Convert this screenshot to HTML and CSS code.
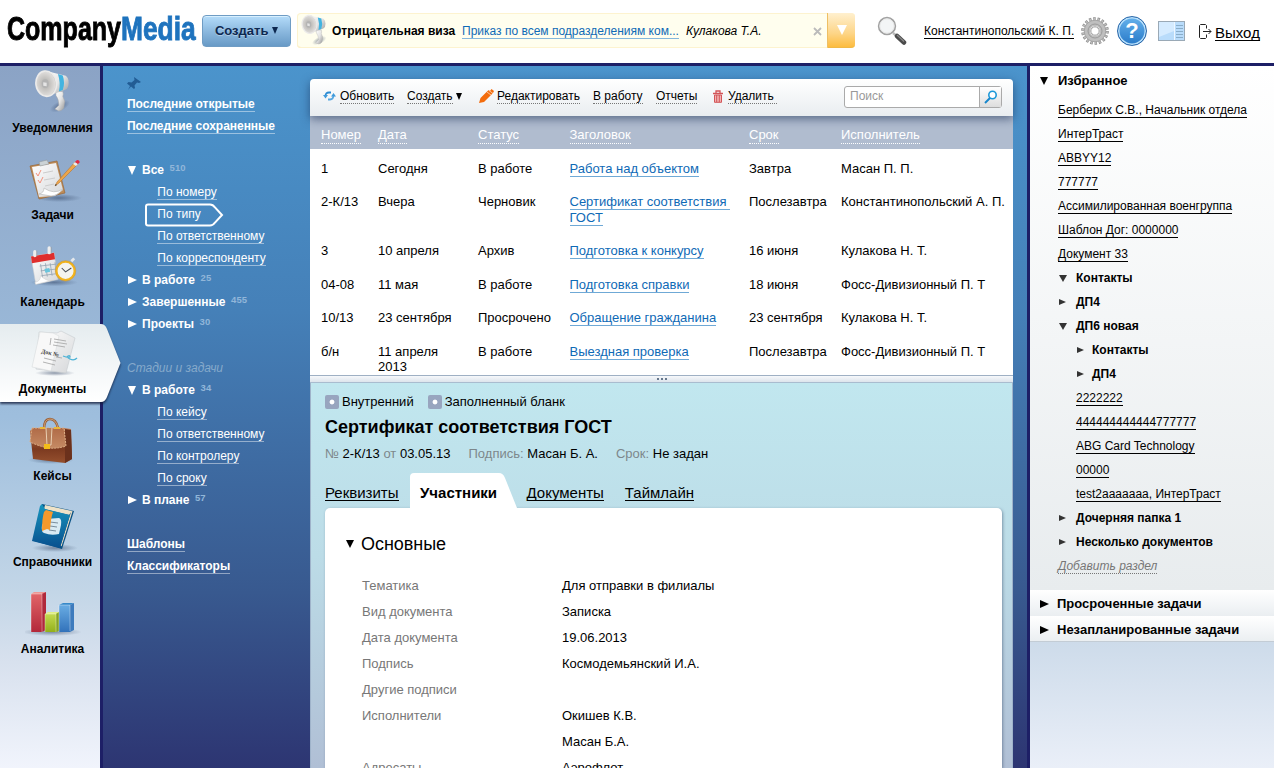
FILE: index.html
```html
<!DOCTYPE html>
<html lang="ru">
<head>
<meta charset="utf-8">
<title>CompanyMedia</title>
<link rel="stylesheet" href="styles.css">
</head>
<body>
<svg class="defs" width="0" height="0" aria-hidden="true">
  <defs>
    <linearGradient id="metal" x1="0" x2="1" y1="0" y2="1"><stop offset="0" stop-color="#fff"/><stop offset=".5" stop-color="#e4e4e4"/><stop offset="1" stop-color="#959595"/></linearGradient>
    <linearGradient id="paper" x1="0" x2="1" y1="0" y2="1"><stop offset="0" stop-color="#fff"/><stop offset="1" stop-color="#d5d7d9"/></linearGradient>
    <linearGradient id="leather" x1="0" x2="0" y1="0" y2="1"><stop offset="0" stop-color="#c07a50"/><stop offset=".6" stop-color="#7c3a20"/><stop offset="1" stop-color="#95502e"/></linearGradient>
    <linearGradient id="flap" x1="0" x2="0" y1="0" y2="1"><stop offset="0" stop-color="#b06b47"/><stop offset="1" stop-color="#c58a64"/></linearGradient>
    <linearGradient id="book" x1="0" x2="0" y1="0" y2="1"><stop offset="0" stop-color="#1795bd"/><stop offset="1" stop-color="#08508f"/></linearGradient>
    <linearGradient id="red" x1="0" x2="0" y1="0" y2="1"><stop offset="0" stop-color="#e16468"/><stop offset="1" stop-color="#b3283a"/></linearGradient>
    <linearGradient id="green" x1="0" x2="0" y1="0" y2="1"><stop offset="0" stop-color="#c3da50"/><stop offset="1" stop-color="#93b01b"/></linearGradient>
    <linearGradient id="blue" x1="0" x2="0" y1="0" y2="1"><stop offset="0" stop-color="#69ace3"/><stop offset="1" stop-color="#3272ba"/></linearGradient>
    <radialGradient id="horn" cx=".45" cy=".5" r=".55"><stop offset="0" stop-color="#a5a5a5"/><stop offset=".4" stop-color="#c4c2bf"/><stop offset=".85" stop-color="#dedcda"/><stop offset="1" stop-color="#bdbdbd"/></radialGradient>
    <radialGradient id="shade"><stop offset="0" stop-color="#2a3c5c" stop-opacity=".5"/><stop offset="1" stop-color="#2a3c5c" stop-opacity="0"/></radialGradient>
    <symbol id="megaphone" viewBox="0 0 40 44">
      <ellipse cx="26" cy="37" rx="11" ry="5" fill="url(#shade)" transform="rotate(-25 26 37)"/>
      <path d="M22 22h7q1 3 0 5l2 5-1 7q-2 3-5 3l-4-2 4-4q0-6-3-10z" fill="url(#metal)" stroke="#aaa" stroke-width=".5"/>
      <path d="M12 1l20 5q3 2 3 7t-3 7L13 27z" fill="url(#metal)"/>
      <path d="M24 4l5 1.500q2.500 7.500 0 15l-4 1.500q2-9-1-18z" fill="#43b4e0"/>
      <ellipse cx="12" cy="14" rx="10.500" ry="13" fill="url(#horn)" stroke="#ecebea" stroke-width="1.600" transform="rotate(-8 12 14)"/>
      <ellipse cx="11" cy="14" rx="3.500" ry="4.500" fill="#b3b3b3"/><path d="M9 12.500l3.500.5v3.500L9 16z" fill="#e5e5e5"/>
    </symbol>
  </defs>
</svg>

<header class="header">
  <div class="logo"><span class="logo-company">Company</span><span class="logo-media">Media</span></div>
  <button class="create">Создать <i class="tri-down"></i></button>
  <div class="notice">
    <svg class="notice-icon" width="28" height="33"><use href="#megaphone" width="28" height="32"/></svg>
    <b>Отрицательная виза</b>
    <a class="notice-link">Приказ по всем подразделениям ком...</a>
    <em>Кулакова Т.А.</em>
    <svg class="dismiss" width="9" height="9" viewBox="0 0 9 9"><path d="M1 1l7 7M8 1L1 8" stroke="#bbb" stroke-width="1.800"/></svg>
    <span class="notice-more"><i></i></span>
  </div>
  <svg width="30" height="30" viewBox="0 0 30 30"><path d="M16 17l5 4" stroke="#bbb" stroke-width="2.500"/><path d="M20 20l7 6.500" stroke="#4b4b4b" stroke-width="4.500" stroke-linecap="round"/><path d="M20 19l7 6.500" stroke="#888" stroke-width="1.200"/><circle cx="10" cy="10" r="8.300" fill="#f3f5f6" stroke="#a2a2a2" stroke-width="1.800"/><circle cx="10" cy="10" r="7.200" fill="none" stroke="#e6e6e6"/></svg>
  <a class="user">Константинопольский К. П.</a>
  <svg width="28" height="28" viewBox="-14 -14 28 28"><circle r="12" fill="none" stroke="#8a8a8a" stroke-width="3.600" stroke-dasharray="2.400 1.789"/><circle r="12" fill="none" stroke="#bdbdbd" stroke-width="2.400" stroke-dasharray="1.400 2.789" stroke-dashoffset="-.5"/><circle r="8" fill="none" stroke="#bfbfbf" stroke-width="6"/><circle r="10.800" fill="none" stroke="#999" stroke-width=".7"/><circle r="7" fill="none" stroke="#9b9b9b" stroke-width="1"/><circle r="4.200" fill="#fff" stroke="#999"/></svg>
  <span class="help">?</span>
  <svg width="27" height="20" viewBox="0 0 27 20"><rect x=".5" y=".5" width="26" height="19" fill="#b9dcfb" stroke="#9aa9b6"/><path d="M1 1h15v9L1 16z" fill="#d5ebff"/><path d="M16.500 1v18" stroke="#eef7ff"/><path d="M18 4.500h7M18 7.500h7M18 10.500h7M18 13.500h7M18 16.500h7" stroke="#8aaeca"/></svg>
  <svg class="door" width="13" height="16" viewBox="0 0 13 16"><path d="M7.500 4.500V1.500l-1-1h-5l-1 1v12l1 1h5l1-1V10.500M4 7.500h8M9.500 5l2.500 2.500L9.500 10" fill="none" stroke="#222"/></svg>
  <a class="exit">Выход</a>
</header>

<div class="body">
  <aside class="rail">
    <a class="rail-item"><svg width="60" height="50"><use href="#megaphone" x="8" y="2" width="42" height="43"/></svg>Уведомления</a>
    <a class="rail-item"><svg width="60" height="50" viewBox="0 0 60 50"><ellipse cx="34" cy="43" rx="23" ry="4" fill="url(#shade)"/><path d="M5 11l27-5 8 32-26 6z" fill="#bd8b57" stroke="#99683a" stroke-width=".7"/><path d="M7 12l24-4 7 27-8 6-16 1z" fill="url(#paper)"/><path d="M14 39q5-1 5-6 10 7 19 1-6 7-12 7z" fill="#fff" stroke="#bbb" stroke-width=".7"/><path d="M14 7l8-2 2 4-9 2z" fill="#cbd3d6" stroke="#929a9d" stroke-width=".6"/><path d="M11 18l2 3 3-6M13 25l2 3 3-6" fill="none" stroke="#f3917c"/><path d="M18 18l10-2M19 25l11-2M20 31l9-2" stroke="#ccc"/><path d="M30 31l2-4L50 7l3 2-19 19z" fill="#eda64b" stroke="#b26d25" stroke-width=".5"/><path d="M48 9l2-2 3 2-2 2z" fill="#e7eef3"/><path d="M50 7l2-2q3 0 2.500 2.500L53 9z" fill="#df2942"/><path d="M30 31l.700-2 1.300 1z" fill="#333"/></svg>Задачи</a>
    <a class="rail-item"><svg class="calendar" width="60" height="50" viewBox="0 0 60 50"><ellipse cx="29" cy="40" rx="25" ry="4" fill="url(#shade)"/><path d="M5 13l24-4 4 28-23 5z" fill="url(#paper)" stroke="#ccc" stroke-width=".5"/><path d="M5 13l24-4 1 7-24 4z" fill="#df2e2d"/><path d="M14 23l17-2M15 28l17-2M16 33l15-2M15 21l2 14M20 20l2 14M25 20l2 13M30 19l1 11" stroke="#91a2b0" stroke-width=".8" fill="none"/><path d="M19 26l5-1 1 4-5 1z" fill="#6ac5dc"/><path d="M9 40q6-1 6-7 6 6 12 5L10 42z" fill="#fff" stroke="#ccc" stroke-width=".5"/><path d="M9 8v4M24 4v5" stroke="#eee" stroke-width="3.500" stroke-linecap="round"/><path d="M11 7v6M26 3v7" stroke="#999" stroke-width=".7"/><path d="M46 17l3-3 2 2-3 3z" fill="#e5e8eb"/><circle cx="41" cy="28" r="9.500" fill="#f4f4ef" stroke="#f1b31c" stroke-width="2.300"/><circle cx="41" cy="28" r="10.700" fill="none" stroke="#d28b13" stroke-width=".4"/><path d="M37 25l4 4 6-4" stroke="#454b52" fill="none" stroke-width="1.100"/></svg>Календарь</a>
    <a class="rail-item active">
      <svg class="active-shape" width="124" height="84" viewBox="0 0 124 84"><defs><linearGradient id="act" x1="0" x2="0" y1="0" y2="1"><stop offset="0" stop-color="#e5ecef"/><stop offset="1" stop-color="#fff"/></linearGradient></defs><path d="M-5 0h106q4 0 6 5l13.500 34L107 73q-2 5-6 5H-5z" fill="url(#act)"/></svg>
      <svg class="active-icon" width="60" height="50" viewBox="0 0 60 50"><ellipse cx="30" cy="44" rx="20" ry="3" fill="url(#shade)"/><path d="M14 3l18 1 4-2 14 7-9 35-30-4z" fill="url(#paper)" stroke="#c6cbcf" stroke-width=".6"/><path d="M15 3l13 1 6 3-8 35-19-4z" fill="#f8f8f8" stroke="#d3d6d8" stroke-width=".5"/><path d="M26 9l-1 7M29 10l12 2M29 13l13 2M28 16l12 2M19 29l12 3M18 33l12 3M31 28l6 1" stroke="#aaa" stroke-width=".9" fill="none"/><path d="M38 27q5 2 7 1 0-2-2-1t2 3 7-1" stroke="#4db3d6" stroke-width="1.300" fill="none"/><text x="16" y="24" class="doc-label" transform="rotate(12 16 24)">Док №</text></svg><span class="active-label">Документы</span></a>
    <a class="rail-item"><svg width="60" height="50" viewBox="0 0 60 50"><ellipse cx="26" cy="44" rx="23" ry="4" fill="url(#shade)"/><path d="M19 13q0-10 6-10t8 9" fill="none" stroke="#996039" stroke-width="2.600"/><path d="M19 13q0-10 6-10t8 9" fill="none" stroke="#e1b88c" stroke-width=".7"/><path d="M5 15l3-3h31l7 1 1 30-7 4-32-4z" fill="url(#leather)"/><path d="M40 13l6 1 1 29-7 4z" fill="#6b311c"/><path d="M7 12h32l2 18q-9 3-17 2T5 26z" fill="url(#flap)" stroke="#dfb087" stroke-width="1" stroke-dasharray="2 1"/><path d="M21 12l1 17h4l1-17" fill="#b57c58" stroke="#ead0b3"/><path d="M19 28h6v5h-6z" fill="#f3bd19"/><path d="M15 11h5v2h-5zM29 11h6v2h-6z" fill="#e9b739"/></svg>Кейсы</a>
    <a class="rail-item"><svg width="60" height="50" viewBox="0 0 60 50"><ellipse cx="30" cy="46" rx="23" ry="4" fill="url(#shade)"/><path d="M17 2l32 7-12 38-28-8z" fill="#075083"/><path d="M20 3l27 6-3 4-25-6z" fill="#eee2c7"/><path d="M47 9l-11 35" stroke="#eadcc3" stroke-width="1.200"/><path d="M17 2l3 5 25 6-10 33-28-7L15 4z" fill="url(#book)"/><path d="M21 17l13-1q3 1 2 7l-2 9q-8 2-15-1-3-1-2-8z" fill="#d8eaf3"/><path d="M25 20l8 1M25 24l7 1M24 28l7 1" stroke="#788d9d"/><path d="M21 8l7 2q-2 5-3 18l-3-1-5 2q0-13 2-19z" fill="#f5992c"/></svg>Справочники</a>
    <a class="rail-item"><svg width="60" height="50" viewBox="0 0 60 50"><ellipse cx="27" cy="43" rx="30" ry="4" fill="url(#shade)"/><g transform="translate(-1 1)"><path d="M7 4l3-2h12l-2 2z" fill="#ee9794"/><path d="M7 4h11v38H7z" fill="url(#red)"/><path d="M18 4l4-2v38l-4 2z" fill="#b0293b"/><path d="M21 24l3-2h12l-3 2z" fill="#e0ef83"/><path d="M21 24h12v18H21z" fill="url(#green)"/><path d="M32 24l3-2v19l-3 1z" fill="#85a326"/><path d="M35 15l4-2h11l-4 2z" fill="#3689ca"/><path d="M35 15h11v27H35z" fill="url(#blue)"/><path d="M46 15l4-2v27l-4 2z" fill="#3d7bbd"/><path d="M7 42V4h11v38M35 42V15h11v26M21 42V24h11v18" fill="none" stroke="#fff" stroke-opacity=".35"/></g></svg>Аналитика</a>
  </aside>

  <nav class="nav">
    <svg class="pin" width="14" height="14" viewBox="0 0 14 14"><path d="M7 0l7 5-2 1-2-.5-2.500 3L8 11l-1 1-3-2.500L1 13l2-4L0 6.500 1.500 5l3 .5L7.500 3z" fill="#225c94"/></svg>
    <div class="row"><a class="strong">Последние открытые</a></div>
    <div class="row"><a class="strong">Последние сохраненные</a></div>
    <div class="row"></div>
    <div class="row group"><i class="down"></i><b>Все</b><sup>510</sup></div>
    <div class="row sub"><a>По номеру</a></div>
    <div class="row sub selected"><svg class="sel" width="80" height="24" viewBox="0 0 80 24"><path d="M4 1.500h62q3 0 5 3l7 7.500-7 7.500q-2 3-5 3H4q-2 0-2-2v-17q0-2 2-2z" fill="none" stroke="#fff" stroke-width="2"/></svg><a>По типу</a></div>
    <div class="row sub"><a>По ответственному</a></div>
    <div class="row sub"><a>По корреспонденту</a></div>
    <div class="row group"><i class="right"></i><b>В работе</b><sup>25</sup></div>
    <div class="row group"><i class="right"></i><b>Завершенные</b><sup>455</sup></div>
    <div class="row group"><i class="right"></i><b>Проекты</b><sup>30</sup></div>
    <div class="row"></div>
    <div class="row"><em>Стадии и задачи</em></div>
    <div class="row group"><i class="down"></i><b>В работе</b><sup>34</sup></div>
    <div class="row sub"><a>По кейсу</a></div>
    <div class="row sub"><a>По ответственному</a></div>
    <div class="row sub"><a>По контролеру</a></div>
    <div class="row sub"><a>По сроку</a></div>
    <div class="row group"><i class="right"></i><b>В плане</b><sup>57</sup></div>
    <div class="row"></div>
    <div class="row"><a class="strong">Шаблоны</a></div>
    <div class="row"><a class="strong">Классификаторы</a></div>
  </nav>

  <main class="main">
    <div class="toolbar">
      <svg width="13" height="12" viewBox="0 0 13 12"><path d="M2.500 6q0-3.500 3.500-3.500h2" fill="none" stroke="#2b8bd3" stroke-width="1.800"/><path d="M10.500 5q0 4.500-3.500 4.500H5" fill="none" stroke="#56a7e1" stroke-width="1.800"/><path d="M0 5h5L2.500 8.500zM8 6.500h5L10.500 3z" fill="#3f9adb"/></svg>
      <span><a>Обновить</a></span>
      <span><a>Создать</a> <i class="tool-down"></i></span>
      <svg width="15" height="15" viewBox="0 0 15 15"><path d="M0 14l1.500-5 7-7L10 1l1 1 1.500-2L15 2l-1 2-9 9z" fill="#f36c0c"/><path d="M8 3l4 3M10 1.500l4 3" stroke="#fff" stroke-width=".6"/></svg>
      <span><a>Редактировать</a></span>
      <span><a>В работу</a></span>
      <span><a>Отчеты</a></span>
      <svg width="10" height="13" viewBox="0 0 10 13"><path d="M0 3.500h10M3 3V1h4v2" fill="none" stroke="#d35458" stroke-width="1.300"/><path d="M1.500 5v7.300h7V5z" fill="#f2b3b3" stroke="#d35458"/><path d="M3.700 5v7M6.300 5v7" stroke="#d35458"/></svg>
      <span><a class="delete">Удалить</a></span>
      <div class="search"><span>Поиск</span><i><svg width="14" height="14" viewBox="0 0 14 14"><circle cx="8.500" cy="5" r="3.700" fill="#fff" stroke="#1c98d8" stroke-width="1.600"/><path d="M6 8l-5 5" stroke="#1686cc" stroke-width="2"/></svg></i></div>
    </div>
    <div class="table">
      <div class="tr th"><span><a>Номер</a></span><span><a>Дата</a></span><span><a>Статус</a></span><span><a>Заголовок</a></span><span><a>Срок</a></span><span><a>Исполнитель</a></span></div>
      <div class="tr"><span>1</span><span>Сегодня</span><span>В работе</span><span><a>Работа над объектом</a></span><span>Завтра</span><span>Масан П. П.</span></div>
      <div class="tr tall"><span>2-К/13</span><span>Вчера</span><span>Черновик</span><span><a>Сертификат соответствия&nbsp;<br>ГОСТ</a></span><span>Послезавтра</span><span>Константинопольский А. П.</span></div>
      <div class="tr roomy"><span>3</span><span>10 апреля</span><span>Архив</span><span><a>Подготовка к конкурсу</a></span><span>16 июня</span><span>Кулакова Н. Т.</span></div>
      <div class="tr"><span>04-08</span><span>11 мая</span><span>В работе</span><span><a>Подготовка справки</a></span><span>18 июня</span><span>Фосс-Дивизионный П. Т</span></div>
      <div class="tr roomy"><span>10/13</span><span>23 сентября</span><span>Просрочено</span><span><a>Обращение гражданина</a></span><span>23 сентября</span><span>Кулакова Н. Т.</span></div>
      <div class="tr last"><span>б/н</span><span>11 апреля<br>2013</span><span>В работе</span><span><a>Выездная проверка</a></span><span>Послезавтра</span><span>Фосс-Дивизионный П. Т</span></div>
    </div>
    <div class="splitter"><i></i><i></i><i></i></div>
    <section class="doc">
      <div class="tags"><i></i><span>Внутренний</span><i></i><span>Заполненный бланк</span></div>
      <h1>Сертификат соответствия ГОСТ</h1>
      <div class="meta"><span><s>№</s> 2-К/13 <s>от</s> 03.05.13</span><span><s>Подпись:</s> Масан Б. А.</span><span><s>Срок:</s> Не задан</span></div>
      <div class="tabs">
        <a>Реквизиты</a>
        <div class="tab-active"><svg width="108" height="35" viewBox="0 0 108 35"><path d="M0 35V4q0-4 4-4h85q4 0 6 5l12 30z" fill="#fff"/></svg><b>Участники</b></div>
        <a>Документы</a>
        <a>Таймлайн</a>
      </div>
      <div class="sheet">
        <h2><i></i>Основные</h2>
        <dl>
          <dt>Тематика</dt><dd>Для отправки в филиалы</dd>
          <dt>Вид документа</dt><dd>Записка</dd>
          <dt>Дата документа</dt><dd>19.06.2013</dd>
          <dt>Подпись</dt><dd>Космодемьянский И.А.</dd>
          <dt>Другие подписи</dt><dd></dd>
          <dt>Исполнители</dt><dd>Окишев К.В.</dd>
          <dt></dt><dd>Масан Б.А.</dd>
          <dt>Адресаты</dt><dd>Аэрофлот</dd>
        </dl>
      </div>
    </section>
  </main>

  <aside class="side">
    <section class="fav">
      <h3><i class="down"></i>Избранное</h3>
      <ul>
        <li><a>Берберих С.В., Начальник отдела</a></li>
        <li><a>ИнтерТраст</a></li>
        <li><a>ABBYY12</a></li>
        <li><a>777777</a></li>
        <li><a>Ассимилированная военгруппа</a></li>
        <li><a>Шаблон Дог: 0000000</a></li>
        <li><a>Документ 33</a></li>
        <li><i class="down"></i><b>Контакты</b></li>
        <li><i class="right"></i><b>ДП4</b></li>
        <li><i class="down"></i><b>ДП6 новая</b></li>
        <li class="in"><i class="right"></i><b class="close">Контакты</b></li>
        <li class="in"><i class="right"></i><b class="close">ДП4</b></li>
        <li class="in"><a>2222222</a></li>
        <li class="in"><a>444444444444777777</a></li>
        <li class="in"><a>ABG Card Technology</a></li>
        <li class="in"><a>00000</a></li>
        <li class="in"><a>test2aaaaaaa, ИнтерТраст</a></li>
        <li><i class="right"></i><b>Дочерняя папка 1</b></li>
        <li><i class="right"></i><b>Несколько документов</b></li>
        <li><a class="add">Добавить раздел</a></li>
      </ul>
    </section>
    <div class="bar"><i class="right"></i>Просроченные задачи</div>
    <div class="bar bar-last"><i class="right"></i>Незапланированные задачи</div>
  </aside>
</div>
</body>
</html>
```
FILE: styles.css
```css
* { box-sizing: border-box; }
body { margin: 0; width: 1274px; height: 768px; overflow: hidden; background: #fff; color: #000; font: 12px/14px "Liberation Sans", Arial, sans-serif; }
.defs { position: absolute; }
svg { display: block; }
i { font-style: normal; }

/* header */
.header { height: 66px; border-bottom: 3px solid #1d1f66; display: grid; grid-template-columns: 202px 95px 580px 47px 157px 36px 41px 41px 16px auto; align-items: center; }
.header > * { margin-bottom: 2px; }
.logo { align-self: start; display: flex; padding: 8px 0 0 7px; width: 202px; font: bold 34px/40px "Liberation Sans", sans-serif; }
.logo span { flex: none; transform-origin: 0 0; -webkit-text-stroke: .9px; }
.logo-company { width: 114px; transform: scaleX(.736); }
.logo-media { width: 75px; transform: scaleX(.775); color: #1e73be; }
.create { width: 89px; height: 32px; padding: 0; border: 1px solid #6f9cc4; border-radius: 4px; background: linear-gradient(#b4dcfa, #8cb9df 50%, #689ac6); box-shadow: inset 0 1px #d8f0ff; font: bold 13px "Liberation Sans", sans-serif; color: #0d2850; text-shadow: 0 1px rgba(255,255,255,.35); white-space: nowrap; }
.tri-down { display: inline-block; border: 3.500px solid transparent; border-top: 7px solid #0d2850; border-bottom: 0; vertical-align: 1px; }
.notice { width: 558px; height: 35px; display: grid; grid-template-columns: 31px 130px 224px 127px 14px 28px; align-items: center; padding-left: 4px; border-radius: 4px; background: #fffeee; box-shadow: inset 0 0 0 1px #fdf3cf, inset 0 -1px #fbe5ae; white-space: nowrap; }
.notice-link { justify-self: start; color: #0f6ab6; border-bottom: 1px solid #85b7dc; margin-top: 1px; }
.dismiss { margin-top: 2px; }
.notice-more { height: 35px; border-radius: 0 4px 4px 0; border-left: 1px solid #eebf64; border-bottom: 1px solid #f0b846; background: linear-gradient(#fff0cf, #fdd587 60%, #fdbc3f); display: flex; align-items: center; justify-content: center; }
.notice-more i { border: 5.500px solid transparent; border-top: 10px solid #fff; border-bottom: 0; }
.user, .exit { border-bottom: 1px solid #000; justify-self: start; white-space: nowrap; }
.user { margin-top: 2px; line-height: 13px; }
.exit { font-size: 15px; line-height: 15px; margin-top: 4px; }
.door { margin-top: 3px; }
.help { width: 30px; height: 30px; border-radius: 50%; border: 1px solid #2b67a8; background: linear-gradient(#66b2ec, #2879c8); box-shadow: inset 0 0 0 1.500px #b9e0fb; color: #fff; font: bold 22px/28px "Liberation Sans", sans-serif; text-align: center; }

.body { height: 702px; display: grid; grid-template-columns: 103px 207px 703px 14px 247px; background: linear-gradient(#4b94cc, #4580b8 35%, #38598f 75%, #2d3572); }

/* section rail */
.rail { width: 103px; height: 702px; border-right: 3px solid #1d1f66; background: linear-gradient(#8ba3c5, #9ebedd 50%, #c3d6e7 75%, #d8e1ee 85%, #f1f4fc); position: relative; z-index: 2; }
.rail-item { height: 86.900px; width: 105px; padding-top: 2px; display: flex; flex-direction: column; align-items: center; position: relative; font-weight: bold; line-height: 16px; }
.rail-item > svg { margin: 0 0 2px 4px; }
.rail-item .calendar { padding-top: 2px; }
.rail-item .active-shape { position: absolute; left: 0; top: -2.700px; margin: 0; filter: drop-shadow(0 2px 1px rgba(20,30,60,.8)); }
.active-icon, .active-label { position: relative; }
.doc-label { font: bold 6px "Liberation Serif", serif; fill: #444; }

/* tree */
.nav { padding: 11px 0 0 24px; color: #fff; }
.pin { margin-bottom: 2px; }
.row { height: 22px; display: flex; align-items: center; white-space: nowrap; position: relative; }
.row a { border-bottom: 1px solid rgba(255,255,255,.45); line-height: 13px; margin-top: 1px; }
.row .strong { font-weight: bold; letter-spacing: -.03px; }
.row b { line-height: 14px; }
.row em { color: #86aacb; }
.sub { padding-left: 30.300px; }
.selected a { border-color: transparent; }
.sel { position: absolute; left: 17px; top: 0; }
.group sup { font: bold 9.500px/10px "Liberation Sans", sans-serif; letter-spacing: .1px; color: #91b6d9; margin: -5px 0 0 5.500px; }
.group i { width: 15px; }
.down::before, .right::before { content: ""; display: block; }
.nav .down::before { width: 0; margin-left: 1px; border: 4.500px solid transparent; border-top: 9px solid #fff; border-bottom: 0; }
.nav .right::before { width: 0; margin-left: 1px; border: 4.500px solid transparent; border-left: 9px solid #fff; border-right: 0; }

/* main panel */
.main { margin-top: 13px; height: 689px; display: flex; flex-direction: column; border-radius: 4px 4px 0 0; }
.toolbar { height: 37px; flex: none; padding-left: 13px; display: grid; grid-template-columns: 17px 67px 72px 18px 96px 63px 57px 15px 116px 158px; align-items: center; border-radius: 4px 4px 0 0; background: linear-gradient(#fff, #e9edf0); box-shadow: 0 3px 10px rgba(20,40,80,.55); position: relative; white-space: nowrap; }
.toolbar > svg, .toolbar > span { margin-bottom: 3px; }
.toolbar a { display: inline-block; line-height: 14px; border-bottom: 1px dotted #777; }
.tool-down { display: inline-block; border: 3.500px solid transparent; border-top: 7px solid #000; border-bottom: 0; vertical-align: 0; }
.delete { padding-right: 3px; }
.search { height: 22px; width: 158px; display: flex; border: 1px solid #aaa; border-radius: 3px; background: #fff; color: #999; margin-bottom: 1px; }
.search span { width: 134px; padding: 2px 5px; }
.search i { flex: 1; border-left: 1px solid #aaa; background: linear-gradient(#fff, #ddd); padding: 3px 0 0 4px; }
.table { height: 259px; flex: none; overflow: hidden; background: #fff; font-size: 13px; line-height: 16px; }
.tr { height: 33px; padding: 12px 0 0 11px; display: grid; grid-template-columns: 57px 100px 91.500px 179.500px 92px auto; align-items: start; white-space: nowrap; }
.tall { height: 49px; }
.roomy { height: 34px; }
.last { line-height: 15px; }
.tr a { color: #0f6ab6; border-bottom: 1px solid #6fa9d6; }
.tr.th { height: 33px; padding-top: 11px; background: #b0bccf; }
.th a { display: inline-block; color: #fff; border-bottom: 1px dotted #fff; line-height: 16px; }
.splitter { height: 8px; flex: none; border-top: 1px solid #9fb0c4; border-bottom: 1px solid #a9bccf; background: linear-gradient(#f6f8fb, #dde4ec); display: flex; gap: 2px; justify-content: center; padding-top: 2px; }
.splitter i { width: 2px; height: 2px; background: #67788d; }

/* document card */
.doc { flex: 1; min-height: 0; padding: 10px 11px 0 14px; background: linear-gradient(#c1e7ef, #bcdce7 45%, #b0bfd5); border: 1px solid #9fb3ca; border-width: 0 1px; display: flex; flex-direction: column; overflow: hidden; }
.tags { display: flex; align-items: center; font-size: 13px; height: 17px; flex: none; }
.tags i { width: 14px; height: 14px; border-radius: 2px; background: radial-gradient(circle, #fff 2px, #98a5bf 2.800px); margin-right: 3px; }
.tags span { margin-right: 14px; }
h1 { margin: 6px 0 0; font-size: 18px; line-height: 22px; height: 22px; flex: none; }
.meta { display: flex; gap: 18px; font-size: 13px; margin-top: 8px; height: 16px; line-height: 16px; flex: none; }
.meta s { color: #7d878b; text-decoration: none; }
.tabs { display: flex; height: 35px; margin-top: 11px; flex: none; font-size: 15px; line-height: 15px; }
.tabs > a { border-bottom: 1px solid #000; height: 16px; margin-top: 12px; }
.tab-active { width: 108px; position: relative; margin: 0 9px 0 11px; }
.tab-active b { position: absolute; left: 10.500px; top: 12px; }
.tabs > a:last-child { margin-left: 21px; }
.sheet { width: 676.500px; flex: 1; min-height: 0; background: #fff; border-radius: 5px 5px 0 0; box-shadow: 1px 1px 3px rgba(60,80,110,.5); padding: 25px 21px 0; }
h2 { margin: 0 0 21px; font: 18px/22px "Liberation Sans", sans-serif; letter-spacing: -.05px; display: flex; align-items: center; }
h2 i { border: 4px solid transparent; border-top: 8px solid #000; border-bottom: 0; margin-right: 7px; }
dl { margin: 0; padding-left: 16px; display: grid; grid-template-columns: 200px 1fr; grid-auto-rows: 26px; font-size: 13px; line-height: 20px; }
dt { color: #777; }
dd { margin: 0; }

/* favourites */
.side { grid-column: 5; border-left: 3px solid #1d1f66; background: linear-gradient(#cddbea, #cddbea 82%, #eaeff8); }
.fav { height: 524px; padding-top: 6px; background: linear-gradient(#fff, #e8ecee); }
h3 { margin: 0; font-size: 13px; line-height: 17px; display: flex; align-items: center; padding-left: 10px; }
h3 i { width: 18px; }
.side .down::before { width: 0; border: 4px solid transparent; border-top: 7px solid #333; border-bottom: 0; }
.side .right::before { width: 0; border: 3.500px solid transparent; border-left: 7px solid #333; border-right: 0; }
.side h3 .down::before { border-width: 8px 4.500px 0; border-top-color: #000; }
ul { margin: 9px 0 0; padding: 0 0 0 28px; list-style: none; }
li { height: 24px; display: flex; align-items: center; white-space: nowrap; }
li a { border-bottom: 1px solid #000; line-height: 14px; margin-top: 1px; }
li i { width: 17px; padding-left: 1px; }
li b { padding-left: 1px; }
.in { padding-left: 18px; }
.in i { width: 16px; }
.in .close { padding-left: 0; }
li .add { font-style: italic; color: #777; border-bottom: 1px dotted #777; }
.bar { height: 26px; display: flex; align-items: center; padding: 1px 0 0 10px; font-size: 13px; font-weight: bold; background: linear-gradient(#fff, #eaeef1); white-space: nowrap; }
.bar i { width: 17px; }
.side .bar .right::before { border-width: 4.500px 0 4.500px 9px; border-left-color: #000; }
.bar-last { box-shadow: inset 0 -1px #c3ccd5; }
```
